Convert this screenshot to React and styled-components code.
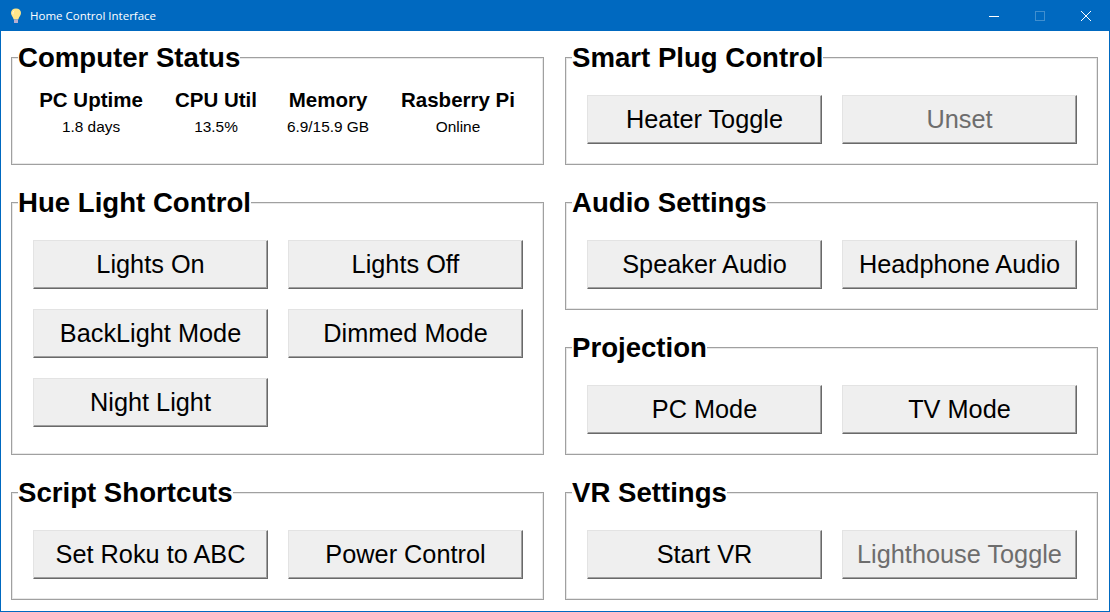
import React from "react";
import styled, { createGlobalStyle } from "styled-components";

const GlobalStyle = createGlobalStyle`
    html, body {
        margin: 0;
        padding: 0;
        background: #fff;
    }
    body {
        font-family: "Liberation Sans", Arial, sans-serif;
    }
`;

const Window = styled.div`
    width: 1110px;
    height: 612px;
    box-sizing: border-box;
    border: 1px solid #0069c0;
    border-top: none;
    display: flex;
    flex-direction: column;
    overflow: hidden;
`;
const TitleBar = styled.div`
    height: 31px;
    margin: 0 -1px;
    flex: none;
    background: #0069c0;
    color: #fff;
    display: flex;
    align-items: center;
    padding: 0 1px 0 9px;
`;
const TitleText = styled.span`
    font-family: "Open Sans", sans-serif;
    font-size: 11.5px;
    margin-left: 7px;
    flex: 1;
`;
const WinButton = styled.div`
    width: 46px;
    height: 31px;
    display: flex;
    align-items: center;
    justify-content: center;
    opacity: ${(p) => (p.$off ? 0.25 : 1)};
`;
const Content = styled.div`
    flex: 1;
    display: grid;
    grid-template-columns: 533px 533px;
    column-gap: 21px;
    padding: 10px 0 0 10px;
`;
const Column = styled.div`
    display: flex;
    flex-direction: column;
    gap: 21px;
`;
const Frame = styled.fieldset`
    margin: 0;
    padding: ${(p) => p.$pad || "22px 21px 0 21px"};
    height: ${(p) => p.$height}px;
    box-sizing: border-box;
    border: 1px solid #a0a0a0;
    box-shadow: inset 0 0 0 1px #e8e8e8;
    min-width: 0;
`;
const Legend = styled.legend`
    padding: 2px 0 0 0;
    margin-left: -15px;
    background: #fff;
    font-size: 27.6px;
    line-height: 30px;
    font-weight: bold;
    color: #000;
`;
const ButtonGrid = styled.div`
    display: grid;
    grid-template-columns: 235px 235px;
    column-gap: 20px;
    row-gap: 20px;
`;
const Button = styled.button`
    height: 49px;
    box-sizing: border-box;
    padding: 0;
    background: #efefef;
    border: 1px solid #696969;
    border-top-color: #e3e3e3;
    border-left-color: #e3e3e3;
    box-shadow: inset -1px -1px 0 #a0a0a0;
    font-family: inherit;
    font-size: 25.3px;
    color: ${(p) => (p.disabled ? "#6d6d6d" : "#000")};
`;
const StatusRow = styled.div`
    display: flex;
`;
const Stat = styled.div`
    width: ${(p) => p.$width}px;
    text-align: center;
    flex: none;
`;
const StatName = styled.div`
    font-size: 20.5px;
    line-height: 24px;
    font-weight: bold;
    color: #000;
`;
const StatValue = styled.div`
    font-size: 15.4px;
    line-height: 18px;
    margin-top: 6px;
    color: #000;
`;

const stats = [
    { name: "PC Uptime", value: "1.8 days", width: 116 },
    { name: "CPU Util", value: "13.5%", width: 134 },
    { name: "Memory", value: "6.9/15.9 GB", width: 90 },
    { name: "Rasberry Pi", value: "Online", width: 170 },
];

function Bulb() {
    return (
        <svg width="14" height="16" viewBox="0 0 14 16">
            <path d="M7 0.500C3.800 0.500 2 2.600 2 5c0 2.600 2.200 3.600 2.700 6.500h4.600C9.800 8.600 12 7.600 12 5c0-2.400-1.800-4.500-5-4.500z" fill="#fde68a" />
            <path d="M5.200 2.800C4 3.600 3.700 5 4.200 6.200" stroke="#fffbe6" strokeWidth="1" fill="none" />
            <rect x="5" y="11.500" width="4" height="3.500" rx="0.5" fill="#b9aed0" />
        </svg>
    );
}

function ButtonSet({ items }) {
    return (
        <ButtonGrid>
            {items.map((v) => (
                <Button key={v.label || v} disabled={v.off}>{v.label || v}</Button>
            ))}
        </ButtonGrid>
    );
}

function App() {
    return (
        <>
            <GlobalStyle />
            <Window>
                <TitleBar>
                    <Bulb />
                    <TitleText>Home Control Interface</TitleText>
                    <WinButton>
                        <svg width="10" height="10" viewBox="0 0 10 10"><path d="M0 5.500h10" stroke="#fff" /></svg>
                    </WinButton>
                    <WinButton $off>
                        <svg width="10" height="10" viewBox="0 0 10 10"><rect x="0.500" y="0.500" width="9" height="9" stroke="#fff" fill="none" /></svg>
                    </WinButton>
                    <WinButton>
                        <svg width="10" height="10" viewBox="0 0 10 10"><path d="M0 0l10 10M10 0L0 10" stroke="#fff" /></svg>
                    </WinButton>
                </TitleBar>
                <Content>
                    <Column>
                        <Frame $height={124} $pad="15px 0 0 21px">
                            <Legend>Computer Status</Legend>
                            <StatusRow>
                                {stats.map((s) => (
                                    <Stat key={s.name} $width={s.width}>
                                        <StatName>{s.name}</StatName>
                                        <StatValue>{s.value}</StatValue>
                                    </Stat>
                                ))}
                            </StatusRow>
                        </Frame>
                        <Frame $height={269}>
                            <Legend>Hue Light Control</Legend>
                            <ButtonSet items={["Lights On", "Lights Off", "BackLight Mode", "Dimmed Mode", "Night Light"]} />
                        </Frame>
                        <Frame $height={124}>
                            <Legend>Script Shortcuts</Legend>
                            <ButtonSet items={["Set Roku to ABC", "Power Control"]} />
                        </Frame>
                    </Column>
                    <Column>
                        <Frame $height={124}>
                            <Legend>Smart Plug Control</Legend>
                            <ButtonSet items={["Heater Toggle", { label: "Unset", off: true }]} />
                        </Frame>
                        <Frame $height={124}>
                            <Legend>Audio Settings</Legend>
                            <ButtonSet items={["Speaker Audio", "Headphone Audio"]} />
                        </Frame>
                        <Frame $height={124}>
                            <Legend>Projection</Legend>
                            <ButtonSet items={["PC Mode", "TV Mode"]} />
                        </Frame>
                        <Frame $height={124}>
                            <Legend>VR Settings</Legend>
                            <ButtonSet items={["Start VR", { label: "Lighthouse Toggle", off: true }]} />
                        </Frame>
                    </Column>
                </Content>
            </Window>
        </>
    );
}
export default App;
